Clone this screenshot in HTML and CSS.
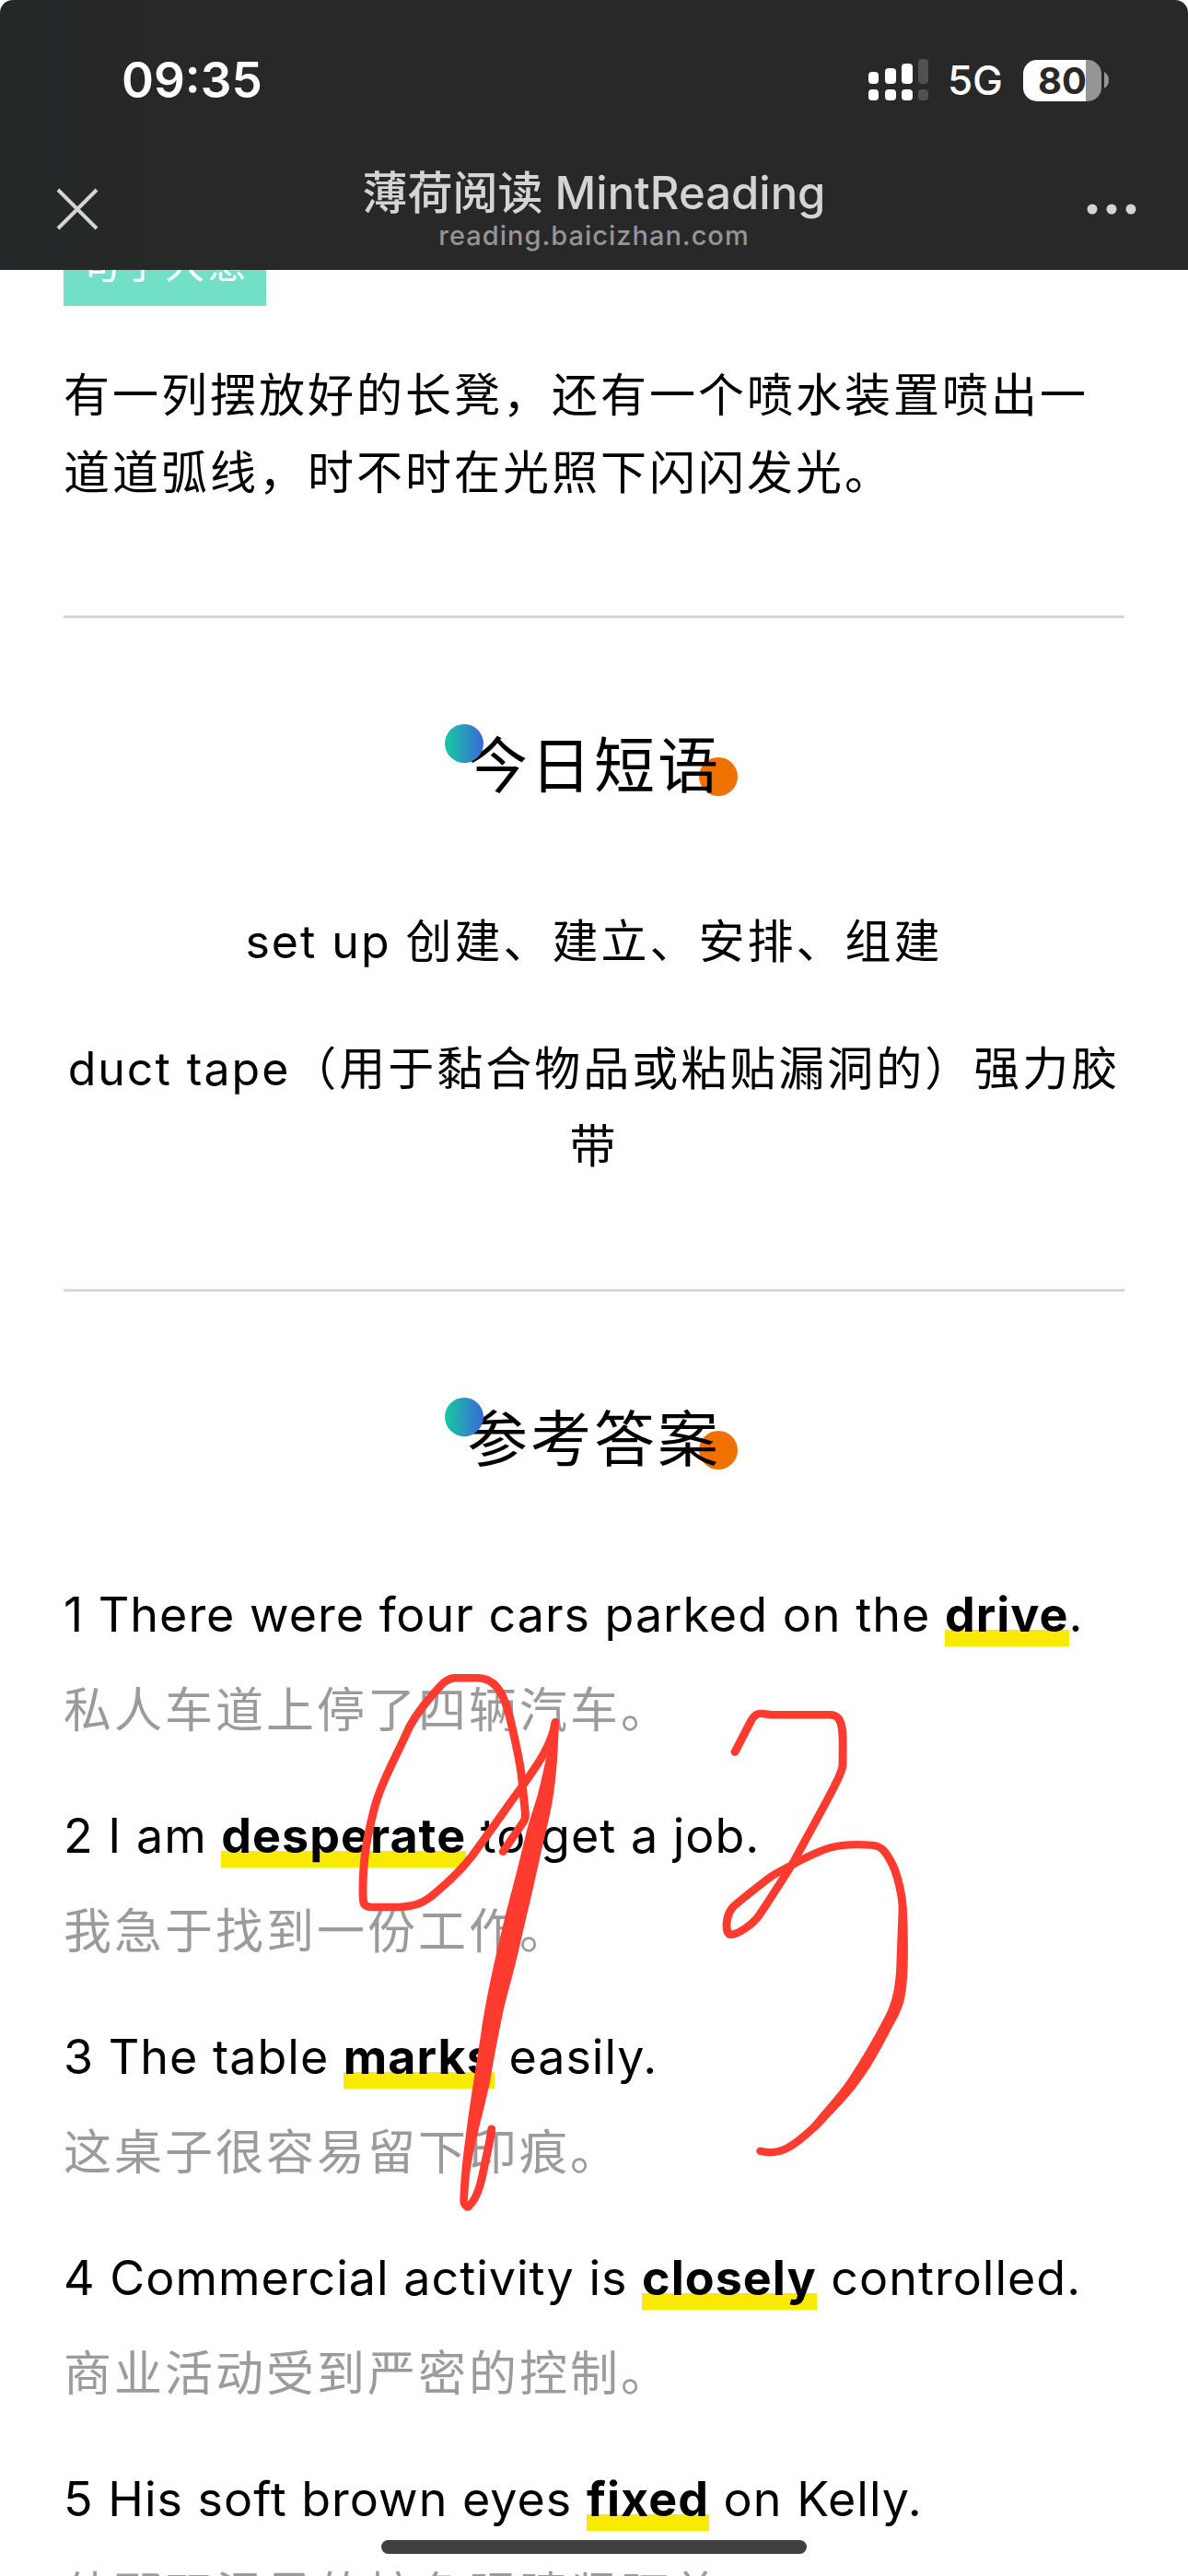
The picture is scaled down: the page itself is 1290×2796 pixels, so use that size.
FILE: index.html
```html
<!DOCTYPE html>
<html lang="zh-CN">
<head>
<meta charset="utf-8">
<meta name="viewport" content="width=device-width, initial-scale=1">
<title>薄荷阅读 MintReading</title>
<link rel="stylesheet" href="styles.css">
</head>
<body>
<header class="topbar">
  <div class="status">
    <time class="clock">09:35</time>
    <div class="status-icons">
      <svg class="signal" viewBox="0 0 66 46" aria-hidden="true">
        <g fill="#fff">
          <rect x="0" y="14" width="11" height="13" rx="4"/>
          <rect x="18" y="10" width="12" height="17" rx="4"/>
          <rect x="36" y="5" width="12" height="22" rx="4"/>
          <rect x="0" y="33" width="11" height="12" rx="4"/>
          <rect x="18" y="33" width="12" height="12" rx="4"/>
          <rect x="36" y="33" width="12" height="12" rx="4"/>
        </g>
        <g fill="#515151">
          <rect x="54" y="0" width="11" height="27" rx="4"/>
          <rect x="54" y="33" width="11" height="12" rx="4"/>
        </g>
      </svg>
      <span class="network">5G</span>
      <div class="battery"><span class="battery-level">80</span><svg class="battery-cap" viewBox="0 0 5 18" aria-hidden="true"><path d="M0 0Q5 3 5 9T0 18z" fill="#959595"/></svg></div>
    </div>
  </div>
  <nav class="nav">
    <button class="nav-btn nav-close" type="button" aria-label="关闭">
      <svg width="46" height="46" viewBox="0 0 46 46"><path d="M2 2L44 44M44 2L2 44" stroke="#d4d4d4" stroke-width="4" fill="none"/></svg>
    </button>
    <div class="nav-title">
      <h1 class="title">薄荷阅读 MintReading</h1>
      <p class="domain">reading.baicizhan.com</p>
    </div>
    <button class="nav-btn nav-more" type="button" aria-label="更多">
      <svg width="54" height="14" viewBox="0 0 54 14"><g fill="#d4d4d4"><circle cx="6" cy="7" r="5.5"/><circle cx="27" cy="7" r="5.5"/><circle cx="48" cy="7" r="5.5"/></g></svg>
    </button>
  </nav>
</header>

<main class="article">
  <h3 class="tag">句子大意</h3>
  <p class="text">有一列摆放好的长凳，还有一个喷水装置喷出一道道弧线，时不时在光照下闪闪发光。</p>

  <hr class="rule">

  <section class="section">
    <h2 class="heading"><span class="heading-text">今日短语</span></h2>
    <div class="phrases">
      <p class="text"><span class="latin" lang="en">set up </span>创建、建立、安排、组建</p>
      <p class="text"><span class="latin" lang="en">duct tape</span>（用于黏合物品或粘贴漏洞的）强力胶带</p>
    </div>
  </section>

  <hr class="rule">

  <section class="section">
    <h2 class="heading"><span class="heading-text">参考答案</span></h2>
    <div class="answers">
      <div class="answer">
        <p class="en">1 There were four cars parked on the <strong class="mark">drive</strong>.</p>
        <p class="zh">私人车道上停了四辆汽车。</p>
      </div>
      <div class="answer">
        <p class="en">2 I am <strong class="mark">desperate</strong> to get a job.</p>
        <p class="zh">我急于找到一份工作。</p>
      </div>
      <div class="answer">
        <p class="en">3 The table <strong class="mark">marks</strong> easily.</p>
        <p class="zh">这桌子很容易留下印痕。</p>
      </div>
      <div class="answer">
        <p class="en">4 Commercial activity is <strong class="mark">closely</strong> controlled.</p>
        <p class="zh">商业活动受到严密的控制。</p>
      </div>
      <div class="answer">
        <p class="en">5 His soft brown eyes <strong class="mark">fixed</strong> on Kelly.</p>
        <p class="zh">他那双温柔的棕色眼睛紧盯着Kelly。</p>
      </div>
    </div>
  </section>

  <!-- Freehand pen marks over the answers -->
  <svg class="ink" viewBox="0 0 1568 1568" preserveAspectRatio="none" aria-hidden="true">
    <g fill="none" stroke="#ff3b30" stroke-width="20" stroke-linecap="round" stroke-linejoin="round">
      <path d="M462 546L513 467Q517 458 516 446C514 420 511 400 509 372C506 320 490 250 475 185C460 130 440 99 400 98L345 98C325 98 312 115 290 142C265 172 240 205 224 248C195 315 165 370 150 430C128 520 121 570 121 650C121 680 122 687 140 689L210 689C250 686 272 678 300 650C345 610 380 570 405 530C450 465 475 425 509 377C540 330 580 275 589 212"/>
      <path d="M375 1462C395 1450 407 1410 415 1365C422 1325 430 1300 434 1261"/>
      <path d="M1026 289L1066 207Q1076 188 1092 190L1115 193L1255 193C1277 193 1282 205 1286 225C1290 250 1288 280 1288 325C1284 345 1276 360 1268 377C1235 445 1205 500 1170 570C1145 612 1120 655 1085 710C1070 732 1035 760 1014 760C1002 755 1002 710 1022 688C1040 670 1070 646 1110 613C1130 598 1150 590 1175 574C1215 552 1250 534 1285 530Q1320 526 1355 529C1382 530 1392 545 1403 567C1425 605 1433 670 1434 690"/>
      <path d="M1220 1255C1170 1305 1135 1332 1088 1318"/>
    </g>
    <g fill="#ff3b30">
      <path d="M1444 688C1447 740 1448 820 1445 870C1441 920 1437 940 1424 968C1390 1035 1365 1090 1330 1140C1300 1185 1262 1222 1228 1262L1213 1248C1250 1200 1282 1165 1308 1122C1340 1070 1375 1005 1398 955C1412 920 1418 880 1419 830L1424 688z"/>
      <path d="M579 212C575 270 562 330 553 370C545 410 530 450 520 490C500 580 485 640 470 700C440 830 420 930 409 1010C395 1110 380 1200 370 1290C360 1370 358 1410 357 1450C360 1470 378 1478 388 1465L376 1450C378 1400 382 1360 392 1310C405 1250 420 1190 430 1140C445 1050 452 1010 464 950C475 900 490 850 500 800C520 710 535 640 550 570C565 500 575 460 583 410C592 350 596 280 598 212z"/>
    </g>
  </svg>
</main>
<div class="home-bar"></div>
</body>
</html>
```
FILE: styles.css
```css
* {
  box-sizing: border-box;
}

body {
  margin: 0;
  height: 100vh;
  overflow: hidden;
  background: #fff;
  color: #000;
  font-family: Inter, "Noto Sans CJK SC", sans-serif;
}

h1, h2, h3, p {
  margin: 0;
  font-weight: 400;
}

/* Top bar */
.topbar {
  position: fixed;
  inset: 0 0 auto;
  z-index: 2;
  padding-bottom: 13px;
  border-radius: 14px 14px 0 0;
  background: linear-gradient(90deg, #252828, #282828 30%);
  color: #fff;
}

.status {
  display: flex;
  justify-content: space-between;
  align-items: center;
  height: 174px;
  padding: 0 86px 0 132px;
}

.clock {
  font-size: 53px;
  font-weight: 600;
}

.status-icons {
  display: flex;
  align-items: center;
}

.signal {
  width: 66px;
  height: 46px;
  margin-right: 20px;
}

.network {
  margin-right: 22px;
  font-size: 44px;
  font-weight: 500;
}

.battery {
  display: flex;
  align-items: center;
  gap: 3px;
}

.battery-level {
  width: 85px;
  height: 45px;
  padding-left: 16px;
  border-radius: 15px;
  background: linear-gradient(90deg, #fff 80%, #959595 80%);
  color: #282828;
  font-size: 40px;
  font-weight: 700;
  line-height: 45px;
}

.battery-cap {
  width: 5px;
  height: 18px;
}

.nav {
  display: grid;
  grid-template-columns: 1fr auto 1fr;
  align-items: center;
  height: 106px;
  padding: 0 56px;
}

.nav-btn {
  display: flex;
  padding: 0;
  border: 0;
  background: none;
}

.nav-close {
  padding-left: 5px;
}

.nav-more {
  justify-self: end;
}

.nav-title {
  text-align: center;
}

.title {
  color: #d4d4d4;
  font-size: 49px;
  font-weight: 500;
  line-height: 58px;
}

.domain {
  color: #959595;
  font-size: 29px;
  font-weight: 500;
  line-height: 34px;
  letter-spacing: 1px;
}

/* Article */
.article {
  position: relative;
  padding: 240px 69px 0;
  letter-spacing: 3px;
}

.tag {
  width: fit-content;
  margin-bottom: 55px;
  padding: 0 18px;
  background: #72dfc7;
  color: #fff;
  font-size: 43px;
  line-height: 92px;
}

.text {
  font-size: 50px;
  line-height: 84px;
}

.latin {
  letter-spacing: 2px;
}

.rule {
  height: 3px;
  margin: 113px 0 115px;
  border: 0;
  background: #d8d8d8;
}

.heading {
  margin-bottom: 104px;
  font-size: 66px;
  line-height: 90px;
  text-align: center;
}

.heading-text {
  position: relative;
  z-index: 0;
  display: inline-block;
}

.heading-text::before,
.heading-text::after {
  content: "";
  position: absolute;
  width: 42px;
  height: 42px;
  border-radius: 50%;
}

.heading-text::before {
  top: 36px;
  right: -18px;
  z-index: -1;
  background: #f07000;
}

.heading-text::after {
  top: 0;
  left: -24px;
  background: linear-gradient(90deg, #18c8a0, #3a68d8);
}

.phrases {
  display: grid;
  gap: 54px;
  text-align: center;
}

.answers {
  display: grid;
  gap: 52px;
}

.answer {
  display: grid;
  gap: 20px;
}

.en,
.zh {
  font-size: 52px;
  line-height: 84px;
}

.en {
  letter-spacing: 1px;
}

.zh {
  color: #9b9b9b;
}

.mark {
  padding-bottom: 3px;
  background: linear-gradient(#f8ea00, #f8ea00) 0 100% / 100% 18px no-repeat;
  font-weight: 700;
}

.ink {
  position: absolute;
  top: 1780px;
  left: 340px;
  width: 700px;
  height: 660px;
}

.home-bar {
  position: fixed;
  bottom: 24px;
  left: 50%;
  z-index: 2;
  width: 462px;
  height: 15px;
  margin-left: -231px;
  border-radius: 8px;
  background: #404040;
}
```
